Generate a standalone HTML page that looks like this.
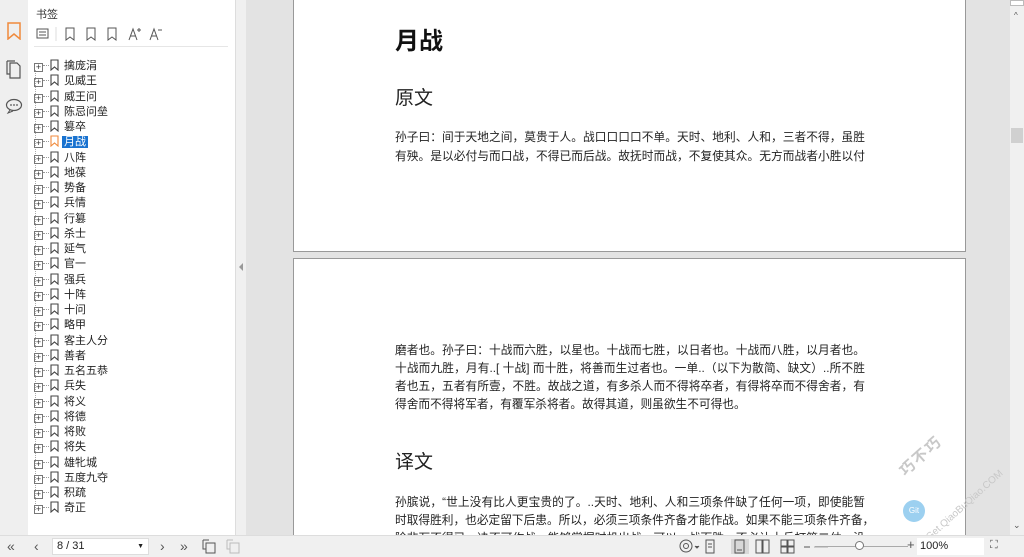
<!DOCTYPE html>
<html><head><meta charset="utf-8"><style>
*{margin:0;padding:0;box-sizing:border-box}
body{width:1024px;height:557px;overflow:hidden;position:relative;background:#e3e3e3;font-family:"Liberation Sans","Noto Sans CJK SC",sans-serif;color:#222}
.abs{position:absolute}
#strip{left:0;top:0;width:28px;height:535px;background:#efefef}
#panel{left:28px;top:0;width:207px;height:535px;background:#fff}
#div{left:235px;top:0;width:11px;height:535px;background:#f0f0f0;border-left:1px solid #ddd}
#sb{left:1010px;top:0;width:14px;height:535px;background:#f0f0f0}
.page{position:absolute;left:293px;width:673px;background:#fff;border:1px solid #999}
.bm{position:absolute;left:34px;font-size:11px;height:15px;line-height:15px;white-space:nowrap}
.bm .pl{display:inline-block;width:9px;height:9px;border:1px solid #777;vertical-align:-1px;position:relative;font-size:9px;line-height:7px;text-align:center;color:#333}
.bm .dot{display:inline-block;width:6px;border-top:1px dotted #999;vertical-align:3px}
.bm svg{vertical-align:-2px;margin:0 5px 0 1px}
.ln{position:absolute;left:395px;width:470px;font-size:11.7px;white-space:nowrap;text-align:justify;text-align-last:justify;color:#222}
#bar{left:0;top:535px;width:1024px;height:22px;background:#f0f0f0;border-top:1px solid #ddd;font-size:11px}
</style></head><body>
<div class="abs" id="strip">
<svg class="abs" style="left:6px;top:22px" width="16" height="18"><path d="M2 1h12v16l-6-5-6 5z" fill="none" stroke="#f08a3c" stroke-width="1.5"/></svg>
<svg class="abs" style="left:6px;top:60px" width="16" height="20"><path d="M4 3h7l3 3v12H4z M1 1h8M1 1v13h3" fill="none" stroke="#555" stroke-width="1.2"/></svg>
<svg class="abs" style="left:5px;top:98px" width="18" height="16"><ellipse cx="9" cy="7" rx="7.5" ry="5.5" fill="none" stroke="#555" stroke-width="1.2"/><path d="M5 12l-2 3 5-2" fill="none" stroke="#555"/><circle cx="6" cy="7" r=".9" fill="#555"/><circle cx="9" cy="7" r=".9" fill="#555"/><circle cx="12" cy="7" r=".9" fill="#555"/></svg>
</div>
<div class="abs" id="panel">
<div class="abs" style="left:8px;top:6px;font-size:11px;color:#333">书签</div>
<svg class="abs" style="left:8px;top:27px" width="130" height="14" fill="none" stroke="#555" stroke-width="1">
<rect x="1" y="2" width="11" height="9"/><path d="M3 5h7M3 8h7"/><path d="M20 0v14" stroke="#ddd"/>
<path d="M30 1h8v12l-4-3-4 3z"/><path d="M51 1h8v12l-4-3-4 3z"/><path d="M72 1h8v12l-4-3-4 3z"/>
<path d="M93 13l4-11 4 11M94.5 9h5M101 3h4M103 1v4"/><path d="M114 13l4-11 4 11M115.5 9h5M122 3h4"/></svg>
<div class="abs" style="left:6px;top:46px;width:194px;height:1px;background:#e6e6e6"></div>
</div>
<div class="abs" style="left:35px;top:70px;height:440px;border-left:1px dotted #aaa"></div>
<div class="abs" id="div"><div class="abs" style="left:3px;top:263px;width:0;height:0;border-top:4px solid transparent;border-bottom:4px solid transparent;border-right:4px solid #999"></div></div>
<div class="abs" id="sb"><div class="abs" style="left:0;top:0;width:14px;height:6px;border:1px solid #bbb;background:#fff"></div><div class="abs" style="left:4px;top:11px;font-size:8px;color:#555">^</div><div class="abs" style="left:1px;top:128px;width:12px;height:15px;background:#d0d0d0"></div><div class="abs" style="left:3px;top:520px;font-size:9px;color:#555">⌄</div></div>

<div class="page" style="top:-2px;height:254px"></div>
<div class="page" style="top:258px;height:290px"></div>
<div class="abs" style="left:395px;top:21px;font-size:24px;font-weight:bold;color:#111">月战</div>
<div class="abs" style="left:395px;top:83px;font-size:19px;color:#222">原文</div>
<div class="ln" style="top:128px">孙子曰：间于天地之间，莫贵于人。战口口口口不单。天时、地利、人和，三者不得，虽胜</div>
<div class="ln" style="top:147px">有殃。是以必付与而口战，不得已而后战。故抚时而战，不复使其众。无方而战者小胜以付</div>
<div class="ln" style="top:341px">磨者也。孙子曰：十战而六胜，以星也。十战而七胜，以日者也。十战而八胜，以月者也。</div>
<div class="ln" style="top:359px">十战而九胜，月有..[ 十战] 而十胜，将善而生过者也。一单..（以下为散简、缺文）..所不胜</div>
<div class="ln" style="top:377px">者也五，五者有所壹，不胜。故战之道，有多杀人而不得将卒者，有得将卒而不得舍者，有</div>
<div class="ln" style="top:395px;text-align-last:left;width:auto">得舍而不得将军者，有覆军杀将者。故得其道，则虽欲生不可得也。</div>
<div class="abs" style="left:395px;top:447px;font-size:19px;color:#222">译文</div>
<div class="ln" style="top:493px">孙膑说，“世上没有比人更宝贵的了。..天时、地利、人和三项条件缺了任何一项，即使能暂</div>
<div class="ln" style="top:511px">时取得胜利，也必定留下后患。所以，必须三项条件齐备才能作战。如果不能三项条件齐备，</div>
<div class="ln" style="top:529px">除非万不得已，决不可作战。能够掌握时机出战，可以一战而胜，不必让士兵打第二仗。没</div>

<div class="abs" style="left:895px;top:445px;transform:rotate(-42deg);font-size:15px;font-weight:bold;color:#c8c8c8;letter-spacing:2px">巧不巧</div>
<div class="abs" style="left:915px;top:500px;transform:rotate(-42deg);font-size:10px;color:#c8c8c8;white-space:nowrap">Get.QiaoBuQiao.COM</div>
<div class="abs" style="left:903px;top:500px;width:22px;height:22px;border-radius:50%;background:#9cd0f0;color:#fff;font-size:8px;line-height:22px;text-align:center">Git</div>

<div id="list"></div>
<script>
var n=["擒庞涓","见威王","威王问","陈忌问垒","篡卒","月战","八阵","地葆","势备","兵情","行篡","杀士","延气","官一","强兵","十阵","十问","略甲","客主人分","善者","五名五恭","兵失","将义","将德","将败","将失","雄牝城","五度九夺","积疏","奇正"];
var h="";
for(var i=0;i<n.length;i++){var y=59+i*15.25;var sel=i==5;
h+='<div class="bm" style="top:'+y+'px"><span class="pl">+</span><span class="dot"></span><svg width="9" height="12"><path d="M1 1h7v10l-3.5-3-3.5 3z" fill="none" stroke="'+(sel?'#f08a3c':'#444')+'" stroke-width="1.1"/></svg><span style="'+(sel?'background:#1a73d0;color:#fff;padding:0 2px;margin-left:-2px':'')+'">'+n[i]+'</span></div>';}
document.getElementById('list').innerHTML=h;
</script>

<div class="abs" id="bar">
<div class="abs" style="left:7px;top:2px;font-size:14px;color:#555">«</div>
<div class="abs" style="left:34px;top:2px;font-size:14px;color:#555">‹</div>
<div class="abs" style="left:52px;top:2px;width:97px;height:17px;background:#fff;border:1px solid #ddd;padding-left:4px;line-height:15px;font-size:11px">8 / 31<span style="position:absolute;right:4px;font-size:7px">▼</span></div>
<div class="abs" style="left:160px;top:2px;font-size:14px;color:#555">›</div>
<div class="abs" style="left:180px;top:2px;font-size:14px;color:#555">»</div>
<svg class="abs" style="left:202px;top:3px" width="40" height="15" fill="none" stroke="#555"><rect x="4" y="4" width="9" height="10"/><path d="M1 1v9h3M1 1h6"/><rect x="28" y="4" width="9" height="10" stroke="#bbb"/><path d="M25 1v9h3M25 1h6" stroke="#bbb"/></svg>
<svg class="abs" style="left:678px;top:3px" width="150" height="15" fill="none" stroke="#555">
<circle cx="8" cy="7" r="6"/><circle cx="8" cy="7" r="2.5"/><path d="M17 7l2 2 2-2" fill="#555"/>
<rect x="28" y="1" width="8" height="13"/><path d="M30 5h4M30 8h4"/>
<rect x="53" y="-1" width="18" height="17" fill="#d8d8d8" stroke="none"/><rect x="57" y="1" width="9" height="13"/><path d="M59 11h5"/>
<rect x="78" y="1" width="6" height="13"/><rect x="85" y="1" width="6" height="13"/>
<rect x="103" y="1" width="6" height="6"/><rect x="110" y="1" width="6" height="6"/><rect x="103" y="8" width="6" height="6"/><rect x="110" y="8" width="6" height="6"/>
<path d="M126 8h6"/><path d="M136 8h14" stroke="#aaa"/></svg>
<div class="abs" style="left:815px;top:10px;width:93px;height:1px;background:#aaa"></div>
<div class="abs" style="left:855px;top:5px;width:9px;height:9px;border-radius:50%;border:1px solid #777;background:#fff"></div>
<div class="abs" style="left:907px;top:1px;font-size:13px;color:#555">+</div>
<div class="abs" style="left:917px;top:2px;width:67px;height:17px;background:#fff;line-height:17px;padding-left:3px;font-size:11px">100%</div>
<div class="abs" style="left:990px;top:3px;font-size:11px;color:#555">⛶</div>
</div>
</body></html>
